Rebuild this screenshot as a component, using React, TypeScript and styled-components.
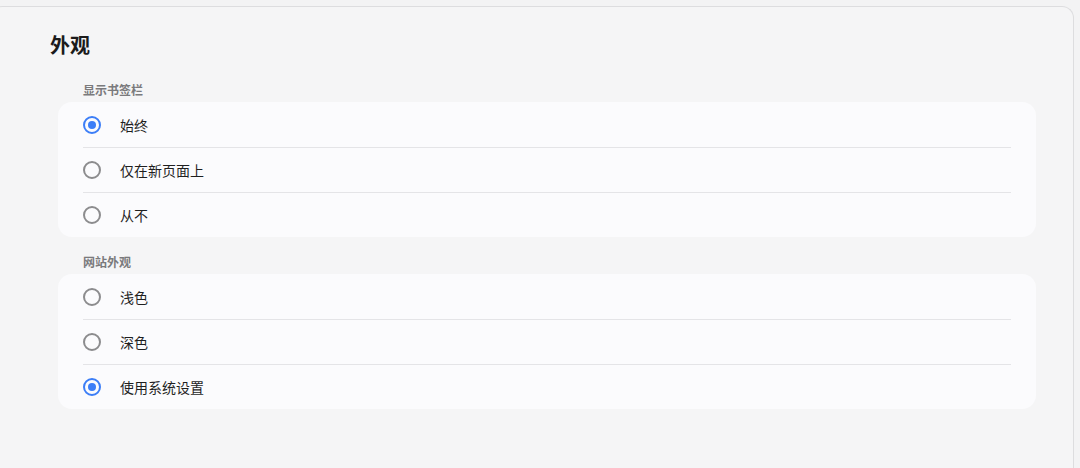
import styled, { createGlobalStyle, css } from "styled-components";

const GlobalStyle = createGlobalStyle`
  html, body {
    margin: 0;
    padding: 0;
    background: #f3f3f4;
    font-family: "Noto Sans CJK SC", "Noto Sans", sans-serif;
    overflow: hidden;
  }
`;

type Option = { label: string; checked?: boolean };

const sections: { title: string; options: Option[] }[] = [
  {
    title: "显示书签栏",
    options: [
      { label: "始终", checked: true },
      { label: "仅在新页面上" },
      { label: "从不" },
    ],
  },
  {
    title: "网站外观",
    options: [
      { label: "浅色" },
      { label: "深色" },
      { label: "使用系统设置", checked: true },
    ],
  },
];

const App = () => {
  return (
    <>
      <GlobalStyle />
      <Panel>
        <Heading>外观</Heading>

        {sections.map((section) => (
          <Section key={section.title}>
            <SectionTitle>{section.title}</SectionTitle>
            <Card>
              {section.options.map((option) => (
                <Row key={option.label}>
                  <Radio $checked={!!option.checked} />
                  <RowLabel>{option.label}</RowLabel>
                </Row>
              ))}
            </Card>
          </Section>
        ))}
      </Panel>
    </>
  );
};

export default App;

const Panel = styled.div`
  box-sizing: border-box;
  height: 462px;
  margin: 6px 6px 0 -10px;
  padding: 24px 37px 0 59px;

  background: #f5f5f6;
  border: 1px solid #dddddf;
  border-bottom: none;
  border-radius: 12px 12px 0 0;
`;

const Heading = styled.h2`
  margin: 0;
  font-size: 20px;
  line-height: 28px;
  font-weight: 700;
  color: #1b1b1b;
`;

const Section = styled.section`
  margin-top: 23px;

  & + & {
    margin-top: 17px;
  }
`;

const SectionTitle = styled.div`
  margin: 0 0 4px 33px;
  font-size: 12px;
  line-height: 16px;
  font-weight: 700;
  color: #7a7a7c;
`;

const Card = styled.div`
  margin-left: 8px;
  padding: 0 25px;
  background: #fbfbfd;
  border-radius: 14px;
`;

const Row = styled.div`
  box-sizing: border-box;
  display: flex;
  align-items: center;
  gap: 19px;
  height: 45px;

  & + & {
    border-top: 1px solid #e4e4e7;
  }
`;

const Radio = styled.span<{ $checked: boolean }>`
  box-sizing: border-box;
  position: relative;
  flex: none;
  width: 18px;
  height: 18px;
  border-radius: 50%;

  ${({ $checked }) =>
    $checked
      ? css`
          border: 2px solid #3c7ef7;

          &::after {
            content: "";
            position: absolute;
            inset: 3px;
            border-radius: 50%;
            background: #3c7ef7;
          }
        `
      : css`
          border: 2px solid #8c8c8e;
        `}
`;

const RowLabel = styled.span`
  font-size: 14px;
  line-height: 20px;
  color: #1f1f1f;
`;
